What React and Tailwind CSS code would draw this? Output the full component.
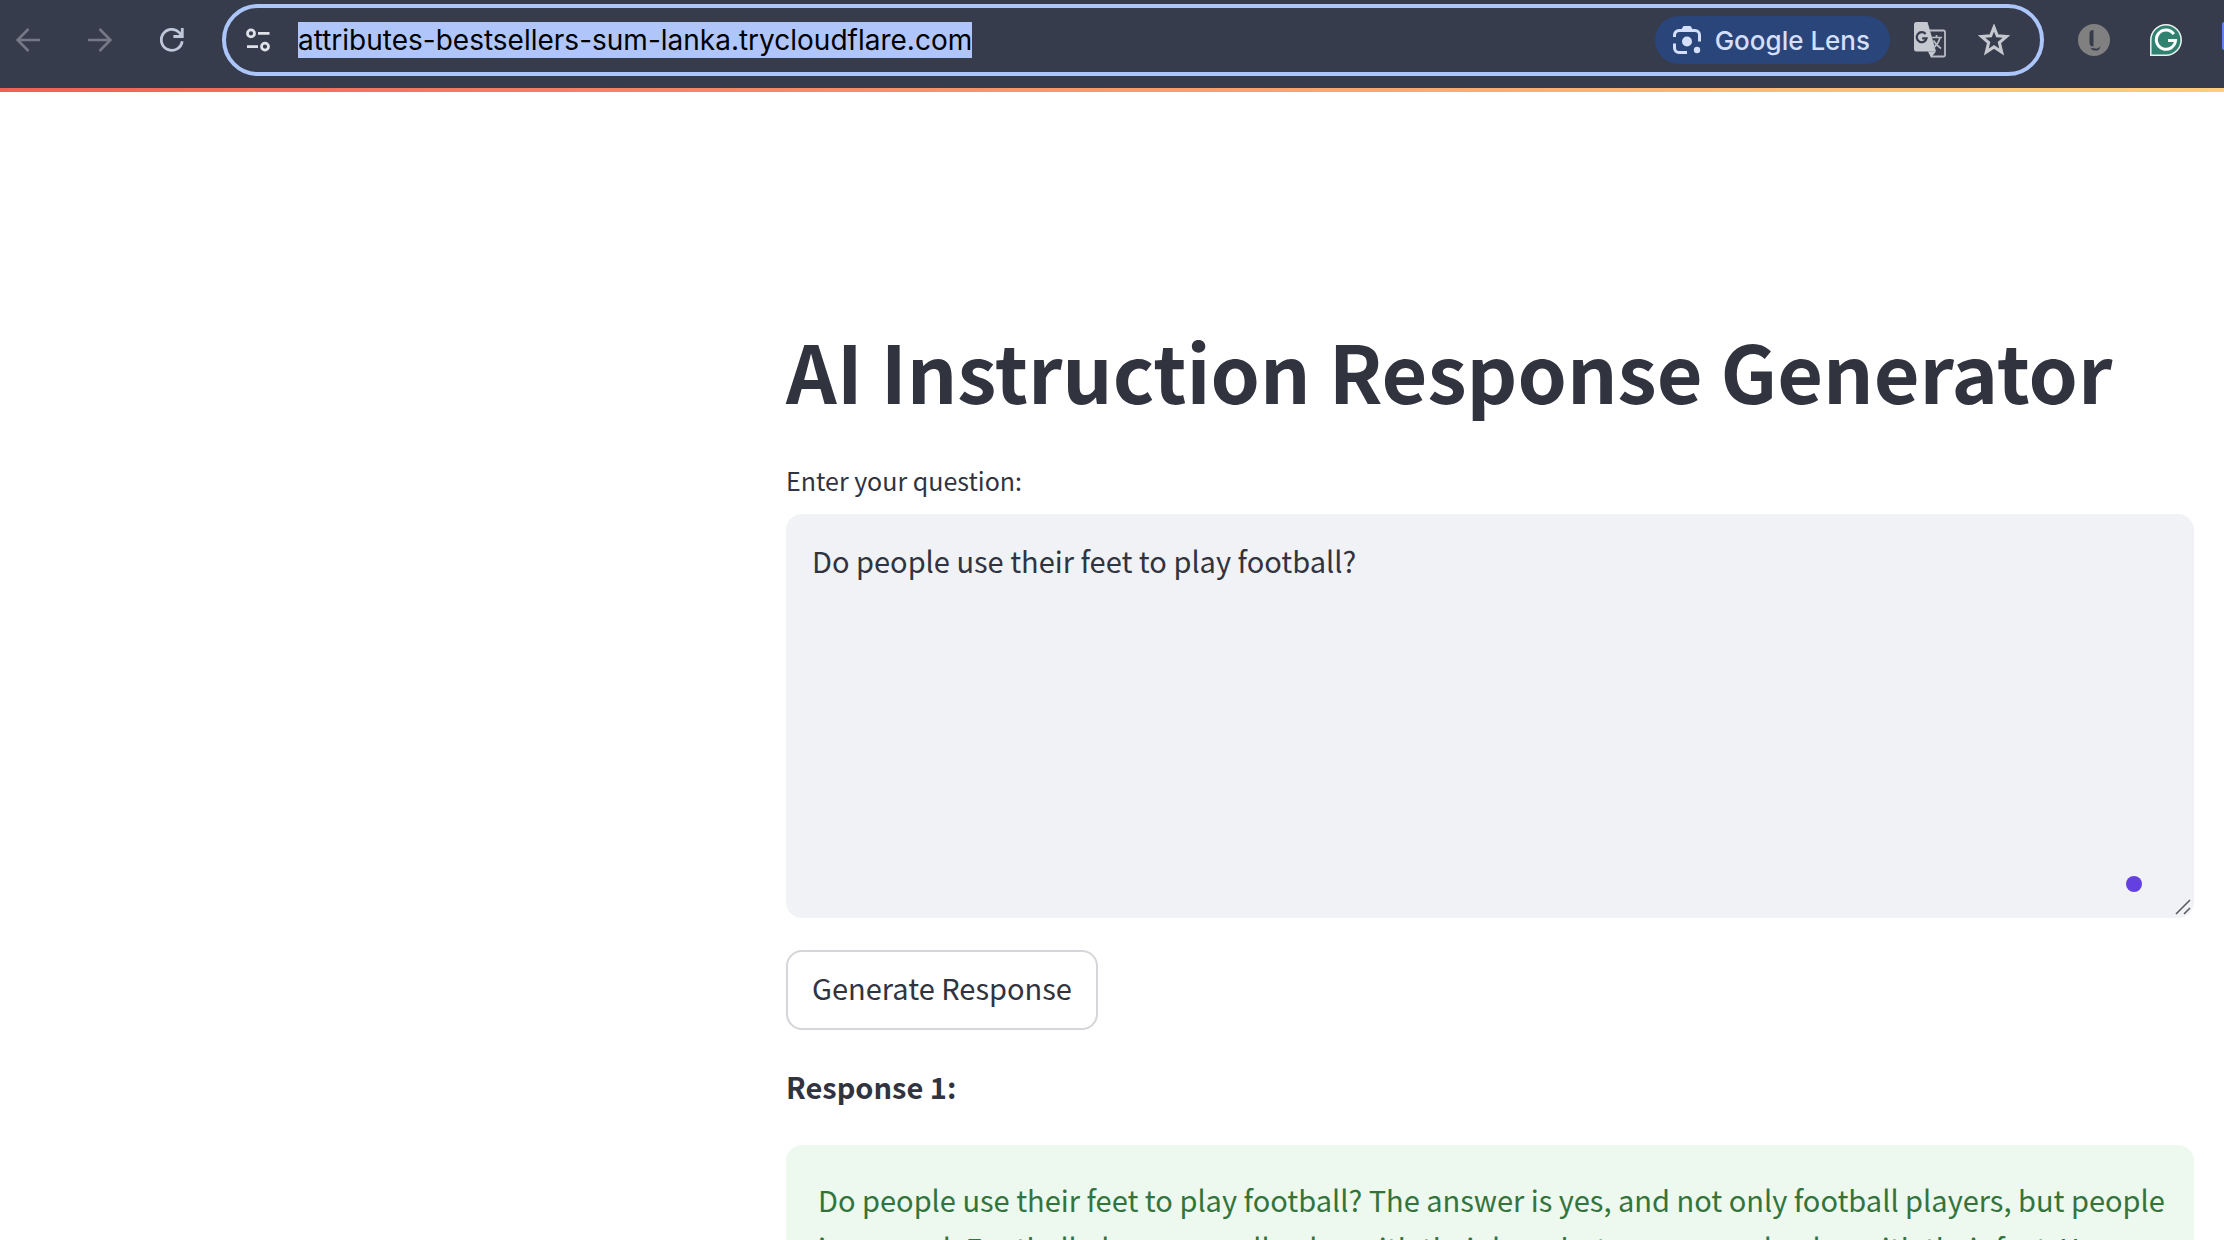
import React from "react";

function BackIcon() {
  return (
    <svg viewBox="0 0 24 24" className="h-6 w-6" fill="none" stroke="#757986" strokeWidth="2.6">
      <path d="M24 12H2M12.5 1 1.6 12l10.9 11" />
    </svg>
  );
}

function ForwardIcon() {
  return (
    <svg viewBox="0 0 24 24" className="h-6 w-6" fill="none" stroke="#757986" strokeWidth="2.6">
      <path d="M0 12h22M11.5 1l10.9 11-10.9 11" />
    </svg>
  );
}

function ReloadIcon() {
  return (
    <svg viewBox="0 0 24 24" className="h-6 w-6" fill="none" stroke="#bfc7da" strokeWidth="2.8">
      <path d="M22.2 13.2A10.5 10.5 0 1 1 19.4 4.6L22 8.2" />
      <path d="M22.3 0v8.5H13.4" />
    </svg>
  );
}

function TuneIcon() {
  return (
    <svg viewBox="0 0 24 24" className="h-6 w-6" fill="none" stroke="#dfe1e8" strokeWidth="2.8">
      <circle cx="5" cy="5.4" r="3.5" />
      <path d="M12 5.4h11.500M1 18.6h11" />
      <circle cx="19" cy="18.6" r="3.5" />
    </svg>
  );
}

function LensIcon() {
  return (
    <svg viewBox="0 0 28 28" className="h-7 w-7" fill="none" stroke="#d3dffb" strokeWidth="3">
      <path d="M1.500 11V9A4.500 4.500 0 0 1 6 4.500H22A4.500 4.500 0 0 1 26.500 9V15.500M1.500 17.500V22A4.500 4.500 0 0 0 6 26.500H14" />
      <path d="M10.500 0h7l2.500 4H8z" fill="#d3dffb" stroke="none" />
      <circle cx="14" cy="15.500" r="5" fill="#d3dffb" stroke="none" />
      <circle cx="24" cy="24" r="3.200" fill="#d3dffb" stroke="none" />
    </svg>
  );
}

function TranslateIcon() {
  return (
    <svg viewBox="0 0 32 36" className="h-9 w-8" fill="none">
      <path d="M12 8.500h17.500a1.500 1.500 0 0 1 1.500 1.500v23a1.500 1.500 0 0 1-1.500 1.500H17" stroke="#b9bcc4" strokeWidth="1.800" />
      <path d="M2.500 0h11L22 29.500H2.500A2.500 2.500 0 0 1 0 27V2.500A2.500 2.500 0 0 1 2.500 0z" fill="#c6c8cf" />
      <path d="M14 29.500h8l-5 6z" fill="#c6c8cf" />
      <path d="M11.600 12a5 5 0 1 0 1 4.300H8.200" stroke="#363c4c" strokeWidth="2.200" />
      <path d="M16.500 15.500H28M22.500 13v2.500M26 15.500c-1 4.500-3.500 8-7 10.500M19.500 18.500c1.500 3 4 5.500 7.500 8" stroke="#b9bcc4" strokeWidth="1.700" />
    </svg>
  );
}

function StarIcon() {
  return (
    <svg viewBox="0 1 28 28" className="h-8 w-8" fill="none" stroke="#c6c8cf" strokeWidth="2.700">
      <path d="M14 4l2.900 7.400 7.900.6-6.100 5.200 2 8.300L14 21l-6.700 4.500 2-8.300L3.200 12l7.900-.6z" />
    </svg>
  );
}

function LanguageToolIcon() {
  return (
    <svg viewBox="0 0 32 32" className="h-8 w-8">
      <circle cx="16" cy="16" r="16" fill="#808080" />
      <path d="M15.500 6c-3 0-4 1.500-4 4v8.500c0 2.800 1 3.800 4 4V6z" fill="#363c4c" />
      <path d="M12.500 23.500c1.500 1.500 2.500.2 4 .8 1.800.7 3.700.5 6-2.300-.5 3.500-2.500 5-5 4.600-2-.3-3.800-.2-5-3.100z" fill="#363c4c" />
    </svg>
  );
}

function GrammarlyIcon() {
  return (
    <svg viewBox="0 0 32 32" className="h-8 w-8" fill="none">
      <path d="M16 .8A15.200 15.200 0 0 1 16 31.200H.8V16A15.200 15.200 0 0 1 16 .8z" fill="#2f8270" stroke="#eef3f1" strokeWidth="1.500" />
      <path d="M23.800 10.200a9.600 9.600 0 1 0 1.700 6.300H18" stroke="#fff" strokeWidth="3" />
    </svg>
  );
}

function Toolbar() {
  return (
    <header className="flex h-[88px] items-start overflow-hidden bg-[#363c4c] font-['Inter','Liberation_Sans',sans-serif]">
      <nav className="flex h-20 items-center gap-12 pl-4" aria-label="Browser">
        <button aria-label="Back"><BackIcon /></button>
        <button aria-label="Forward"><ForwardIcon /></button>
        <button aria-label="Reload"><ReloadIcon /></button>
      </nav>
      <div className="mt-1 ml-[38px] flex h-[72px] min-w-0 flex-1 items-center rounded-full border-4 border-[#adc6fa] pr-[30px] pl-5">
        <button aria-label="Site information"><TuneIcon /></button>
        <div className="ml-7 flex min-w-0 flex-1">
          <input
            aria-label="Address"
            readOnly
            defaultValue="attributes-bestsellers-sum-lanka.trycloudflare.com"
            className="field-sizing-content h-9 bg-[#b0c6fa] text-[28px] leading-9 text-black outline-none"
          />
        </div>
        <button className="mr-6 flex h-12 items-center gap-[14px] rounded-full bg-[#2a457a] pr-5 pl-[18px] text-[26px] font-medium text-[#d3dffb]">
          <LensIcon />
          Google Lens
        </button>
        <button aria-label="Translate" className="mr-8"><TranslateIcon /></button>
        <button aria-label="Bookmark"><StarIcon /></button>
      </div>
      <div className="ml-[34px] flex h-20 shrink-0 items-center gap-10">
        <button aria-label="Spelling"><LanguageToolIcon /></button>
        <button aria-label="Grammar"><GrammarlyIcon /></button>
        <button aria-label="More extensions" className="mb-2 h-7 w-[2px] rounded-l bg-[#5b86ea]" />
      </div>
    </header>
  );
}

function ResizeGrip() {
  return (
    <svg viewBox="0 0 16 16" className="absolute right-[3px] bottom-[3px] h-4 w-4" stroke="#5c5d61" strokeWidth="1.600">
      <path d="M1 15 15 1M9 15l6-6" />
    </svg>
  );
}

export default function App() {
  return (
    <div className="h-screen overflow-hidden bg-white font-['Noto_Sans_CJK_SC','Noto_Sans',sans-serif] text-[#31333f]">
      <Toolbar />
      <div className="h-1 bg-linear-to-r from-[#f0605a] to-[#fccf7c]" />
      <main className="mr-[30px] ml-auto w-[1408px] max-w-full pt-56">
        <h1 className="text-[79px] leading-[108px] font-bold">AI Instruction Response Generator</h1>
        <label htmlFor="question" className="mt-[38px] block text-[25px] leading-9">Enter your question:</label>
        <div className="relative mt-4">
          <textarea
            id="question"
            defaultValue="Do people use their feet to play football?"
            className="block h-[404px] w-full resize-none rounded-2xl bg-[#f0f2f6] px-[26px] py-[22px] text-[29px] leading-[48px] outline-none"
          />
          <span className="absolute right-[52px] bottom-[26px] h-4 w-4 rounded-full bg-[#6440e0]" />
          <ResizeGrip />
        </div>
        <button className="mt-8 h-20 rounded-2xl border-2 border-[#d5d6d9] px-6 pb-1 text-[29px]">Generate Response</button>
        <h2 className="mt-8 text-[29px] leading-[48px] font-bold">Response 1:</h2>
        <div className="mt-[35px] rounded-2xl bg-[#edf8ef] pt-[30px] pr-6 pb-8 pl-8 text-[29px] leading-[48px] text-[#33743c]">
          Do people use their feet to play football? The answer is yes, and not only football players, but people
          in general. Football players usually play with their legs, but some people play with their feet. You
        </div>
      </main>
    </div>
  );
}
